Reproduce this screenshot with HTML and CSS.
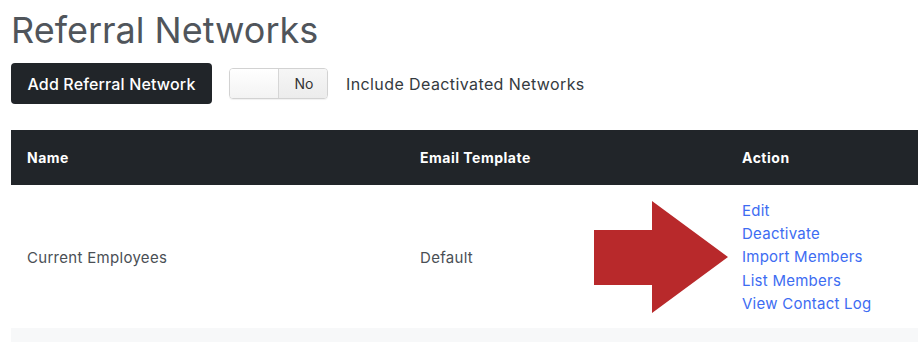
FILE: index.html
```html
<!DOCTYPE html>
<html>
<head>
<meta charset="utf-8">
<title>Referral Networks</title>
<link rel="stylesheet" href="styles.css">
</head>
<body>
<div class="page">
  <h1 class="title">Referral Networks</h1>
  <div class="toolbar">
    <button class="btn-dark">Add Referral Network</button>
    <div class="toggle">
      <span class="toggle-handle"></span>
      <span class="toggle-label">No</span>
    </div>
    <span class="toolbar-label">Include Deactivated Networks</span>
  </div>
  <div class="table-wrap">
    <table class="table">
      <thead>
        <tr>
          <th class="col-name">Name</th>
          <th class="col-tpl">Email Template</th>
          <th class="col-act">Action</th>
        </tr>
      </thead>
      <tbody>
        <tr>
          <td>Current Employees</td>
          <td>Default</td>
          <td class="actions">
            <a href="#">Edit</a>
            <a href="#">Deactivate</a>
            <a href="#">Import Members</a>
            <a href="#">List Members</a>
            <a href="#">View Contact Log</a>
          </td>
        </tr>
        <tr class="stripe">
          <td></td><td></td><td></td>
        </tr>
      </tbody>
    </table>
    <svg class="arrow" width="136" height="114" viewBox="0 0 136 114" aria-hidden="true">
      <polygon points="0,29 58,29 58,0 134,56 58,112 58,84 0,84" fill="#b8292b"/>
    </svg>
  </div>
</div>
</body>
</html>
```
FILE: styles.css
```css
* { box-sizing: border-box; }
html, body { margin: 0; padding: 0; background: #fff; overflow: hidden; }
body {
  font-family: Inter, "Noto Sans", sans-serif;
  color: #4a4f55;
}
.page {
  padding: 8px 0 0 11px;
  width: 918px;
}
.title {
  margin: 0;
  font-size: 36px;
  line-height: 44px;
  font-weight: 400;
  color: #50555b;
}
.toolbar {
  display: flex;
  align-items: center;
  margin-top: 11px;
  height: 41px;
}
.btn-dark {
  height: 41px;
  width: 201px;
  padding: 0;
  border: none;
  border-radius: 4px;
  background: #212529;
  color: #fff;
  font-family: Inter, "Noto Sans", sans-serif;
  font-size: 16px;
  font-weight: 500;
  letter-spacing: 0.15px;
}
.toggle {
  margin-left: 17px;
  display: flex;
  width: 99px;
  height: 31px;
  border: 1px solid #d2d2d2;
  border-radius: 4px;
  overflow: hidden;
  box-shadow: 0 1px 1px rgba(0,0,0,0.06);
}
.toggle-handle {
  width: 49px;
  background: linear-gradient(#ffffff, #f3f3f3);
  border-right: 1px solid #d6d6d6;
}
.toggle-label {
  flex: 1;
  display: flex;
  align-items: center;
  justify-content: center;
  padding-left: 2px;
  background: linear-gradient(#f6f6f6, #ececec);
  font-size: 14px;
  color: #333;
}
.toolbar-label {
  margin-left: 18px;
  font-size: 16px;
  letter-spacing: 0.4px;
  color: #343a40;
}
.table-wrap {
  position: relative;
  margin-top: 26px;
}
.table {
  width: 907px;
  border-collapse: collapse;
  font-size: 15px;
}
.table th {
  background: #212529;
  color: #fff;
  font-weight: 700;
  font-size: 14px;
  letter-spacing: 0.5px;
  text-align: left;
  height: 55px;
  padding: 0 16px;
  vertical-align: middle;
}
.col-name { width: 393px; }
.col-tpl { width: 322px; }
.table td {
  padding: 14px 16px 13px;
  vertical-align: middle;
  color: #4a4f55;
  letter-spacing: 0.3px;
}
.actions a {
  display: block;
  color: #3d6cf2;
  text-decoration: none;
  line-height: 23.2px;
  letter-spacing: 0.25px;
}
.stripe td {
  background: #f7f8f9;
  height: 15px;
  padding: 0;
}
.arrow {
  position: absolute;
  left: 583px;
  top: 71px;
}
```
